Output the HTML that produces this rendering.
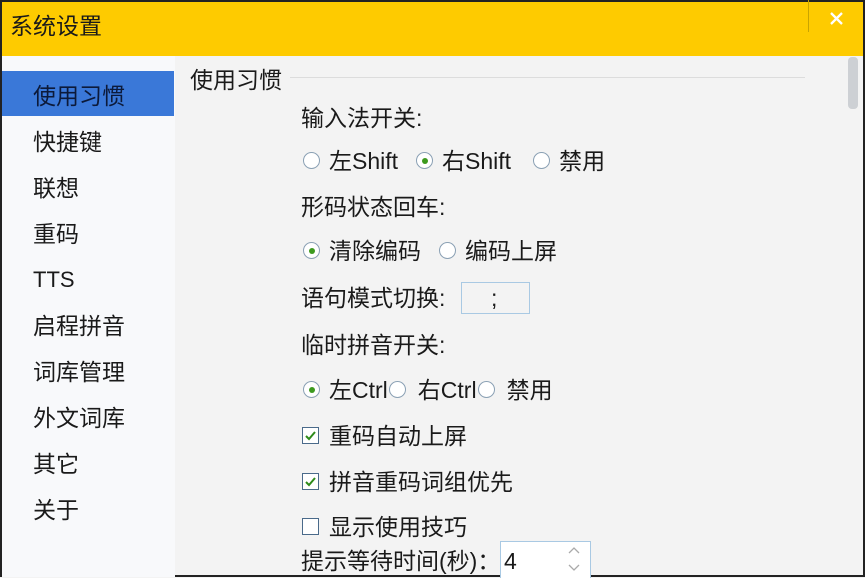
<!DOCTYPE html>
<html><head><meta charset="utf-8"><style>
body{margin:0;width:865px;height:577px;overflow:hidden;background:#f3f3f3;font-family:"Liberation Sans","Noto Sans CJK SC",sans-serif;color:#1a1a1a;position:relative}
.a{position:absolute;white-space:nowrap;font-size:23px;line-height:26px}
.title{position:absolute;left:0;top:0;width:865px;height:56px;background:#fecb00;border-top:2px solid #222;box-sizing:border-box}
.side{position:absolute;left:2px;top:56px;width:173px;height:521px;background:#f8f9fb}
.sel{position:absolute;left:2px;top:71px;width:172px;height:45px;background:#3a78d8}
.r{display:inline-block;width:15px;height:15px;border:1px solid #8aa0b4;border-radius:50%;background:#fff;vertical-align:0px;position:relative;margin-right:9px}
.r.on::after{content:"";position:absolute;left:4.5px;top:4.5px;width:6px;height:6px;border-radius:50%;background:#3d9a1e}
.c{display:inline-block;width:15px;height:15px;border:1px solid #4a6a8a;background:#fff;vertical-align:0px;position:relative;margin-right:10px}
.g{margin-left:18px}
</style></head><body>
<div class="title"></div>
<div class="a" style="left:10px;top:13px">系统设置</div>
<div style="position:absolute;left:808px;top:0;width:1px;height:32px;background:#c9a400"></div>
<svg style="position:absolute;left:829px;top:11px" width="15" height="15"><path d="M2 2L13 13M13 2L2 13" stroke="#fff" stroke-width="2.3"/></svg>
<div style="position:absolute;left:0;top:0;width:2px;height:577px;background:#222"></div>
<div style="position:absolute;right:0;top:0;width:2px;height:577px;background:#222"></div>
<div style="position:absolute;left:0;bottom:0;width:865px;height:2px;background:#222"></div>
<div class="side"></div>
<div class="sel"></div>
<div class="a" style="left:33px;top:83px;color:#0c1a3a">使用习惯</div>
<div class="a" style="left:33px;top:129px">快捷键</div>
<div class="a" style="left:33px;top:175px">联想</div>
<div class="a" style="left:33px;top:221px">重码</div>
<div class="a" style="left:33px;top:267px;font-size:22px">TTS</div>
<div class="a" style="left:33px;top:313px">启程拼音</div>
<div class="a" style="left:33px;top:359px">词库管理</div>
<div class="a" style="left:33px;top:405px">外文词库</div>
<div class="a" style="left:33px;top:451px">其它</div>
<div class="a" style="left:33px;top:497px">关于</div>
<div style="position:absolute;left:848px;top:57px;width:10px;height:52px;background:#cdd0d4;border-radius:4px"></div>
<div class="a" style="left:190px;top:67px">使用习惯</div>
<div style="position:absolute;left:290px;top:77px;width:515px;height:1px;background:#dcdcdc"></div>
<div class="a" style="left:301px;top:105px">输入法开关:</div>
<div class="a" style="left:303px;top:148px"><span class="r"></span>左Shift<span class="r on g"></span>右Shift<span class="r g" style="margin-left:22px"></span>禁用</div>
<div class="a" style="left:301px;top:194px">形码状态回车:</div>
<div class="a" style="left:303px;top:238px"><span class="r on"></span>清除编码<span class="r g"></span>编码上屏</div>
<div class="a" style="left:301px;top:285px">语句模式切换:</div>
<div style="position:absolute;left:461px;top:282px;width:67px;height:30px;border:1px solid #a9c9e3;background:#f3f3f3"></div>
<div class="a" style="left:491px;top:285px">;</div>
<div class="a" style="left:301px;top:332px">临时拼音开关:</div>
<div class="a" style="left:303px;top:377px"><span class="r on"></span>左Ctrl<span class="r" style="margin-left:1px;margin-right:12px"></span>右Ctrl<span class="r" style="margin-left:1px;margin-right:12px"></span>禁用</div>
<div class="a" style="left:302px;top:423px"><span class="c"><svg width="15" height="15" style="position:absolute;left:0;top:0"><path d="M3 8L6 11L12 4" stroke="#2e8b1a" stroke-width="2" fill="none"/></svg></span>重码自动上屏</div>
<div class="a" style="left:302px;top:469px"><span class="c"><svg width="15" height="15" style="position:absolute;left:0;top:0"><path d="M3 8L6 11L12 4" stroke="#2e8b1a" stroke-width="2" fill="none"/></svg></span>拼音重码词组优先</div>
<div class="a" style="left:302px;top:514px"><span class="c"></span>显示使用技巧</div>
<div class="a" style="left:301px;top:548px">提示等待时间(秒)：</div>
<div style="position:absolute;left:500px;top:541px;width:89px;height:36px;border:1px solid #a9c9e3;border-bottom:none;background:#fff"></div>
<div class="a" style="left:504px;top:548px">4</div>
<svg style="position:absolute;left:566px;top:544px" width="16" height="30"><path d="M3 9L8 4L13 9M3 21L8 26L13 21" stroke="#aaa" stroke-width="1.3" fill="none"/></svg>
</body></html>
